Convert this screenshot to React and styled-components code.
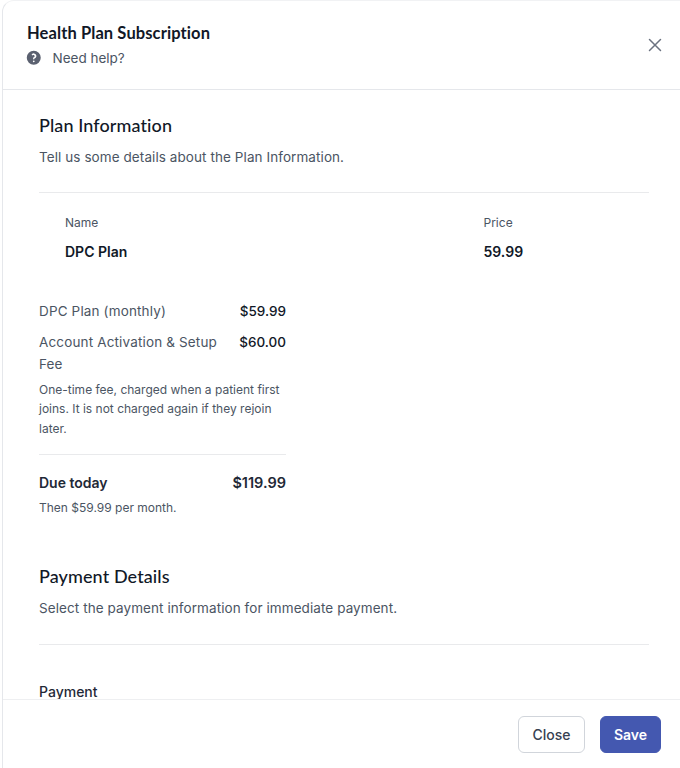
import React from "react";
import styled, { createGlobalStyle } from "styled-components";

const Global = createGlobalStyle`
  html, body { margin: 0; padding: 0; background: #fff; height: 100%; overflow: hidden; }
  body { font-family: Inter, "Liberation Sans", sans-serif; -webkit-font-smoothing: antialiased; }
`;

const Modal = styled.div`
  height: 768px; box-sizing: border-box; display: flex; flex-direction: column;
  background: #fff; border-left: 1px solid #e5e7eb; margin-left: 2px; width: 678px;
  border-top: 1px solid #f1f2f4; border-top-left-radius: 12px; overflow: hidden;
`;
const Header = styled.header`
  height: 89px; flex: none; box-sizing: border-box; margin-left: -3px; padding: 22px 16px 0 27px;
  border-bottom: 1px solid #e5e7eb; display: flex; justify-content: space-between; align-items: center;
`;
const HeaderText = styled.div`
  align-self: flex-start; display: flex; flex-direction: column; gap: 5px;
`;
const Title = styled.h1`
  margin: 0; font: 700 16.5px/20px Lato, "Open Sans", sans-serif; color: #111827; letter-spacing: 0.1px;
`;
const Help = styled.div`
  display: flex; align-items: center; gap: 10px; font-size: 13.5px; line-height: 20px; color: #4b5563;
`;
const HelpGlyph = styled.svg`
  margin-left: -2px; flex: none;
`;
const CloseIcon = styled.button`
  border: 0; background: none; padding: 0; display: flex; color: #6b7280; margin-top: -22px;
`;
const Body = styled.main`
  flex: 1; min-height: 0; overflow: hidden; padding: 24px 31px 0 36px;
`;
const SectionTitle = styled.h2`
  margin: 0; font: 500 18px/22px Lato, "Open Sans", sans-serif; color: #111827; letter-spacing: 0.1px;
`;
const SectionDesc = styled.p`
  margin: 11px 0 0; font-size: 13.5px; line-height: 20px; color: #4b5563; letter-spacing: 0.08px;
`;
const Rule = styled.hr`
  border: 0; border-top: 1px solid #e9eaec; margin: ${(p) => p.$m || "25px 0 0"};
`;
const PlanGrid = styled.div`
  display: grid; grid-template-columns: 418.5px 1fr; padding: 21px 0 0 26px; row-gap: 10px;
`;
const ColLabel = styled.div`
  font-size: 12px; line-height: 18px; color: #4b5563;
`;
const ColValue = styled.div`
  font-size: 14px; line-height: 20px; font-weight: 600; color: #111827;
`;
const Summary = styled.div`
  width: 247px; margin-top: 38px; display: flex; flex-direction: column;
`;
const Line = styled.div`
  display: flex; justify-content: space-between; gap: 12px; margin-bottom: ${(p) => p.$mb || 0}px;
`;
const LineLabel = styled.span`
  font-size: 13.5px; line-height: 22px; color: #4b5563; letter-spacing: 0.15px;
`;
const LineValue = styled.span`
  font-size: 13.5px; line-height: 22px; color: #111827; font-weight: 500; white-space: nowrap;
`;
const Note = styled.p`
  margin: ${(p) => p.$mt ?? 5}px 0 0; font-size: 12px; line-height: 19.4px; color: #4b5563;
`;
const TotalLabel = styled.span`
  font-size: 14px; line-height: 22px; font-weight: 600; color: #1f2937;
`;
const TotalValue = styled.span`
  font-size: 14.5px; line-height: 22px; font-weight: 600; color: #1f2937;
`;
const Divider = styled.hr`
  border: 0; border-top: 1px solid #e9eaec; margin: 16px 0 17px;
`;
const Section = styled.section`
  margin-top: 47px;
`;
const FieldLabel = styled.div`
  margin-top: 37px; font-size: 14px; line-height: 20px; font-weight: 500; color: #1f2937;
`;
const Footer = styled.footer`
  height: 69px; flex: none; box-sizing: border-box; margin-left: -3px; background: #fff;
  border-top: 1px solid #eeeff1; display: flex; justify-content: flex-end; align-items: flex-start;
  gap: 15px; padding: 16px 19px 0 0;
`;
const Button = styled.button`
  height: 37px; box-sizing: border-box; border-radius: 6px;
  font: ${(p) => (p.$primary ? 600 : 500)} 14px Inter, sans-serif;
  width: ${(p) => (p.$primary ? 61 : 67)}px; padding: 0;
  border: 1px solid ${(p) => (p.$primary ? "#4458b0" : "#d1d5db")};
  background: ${(p) => (p.$primary ? "#4458b0" : "#fff")};
  color: ${(p) => (p.$primary ? "#fff" : "#374151")};
`;

export default function App() {
  return (
    <>
      <Global />
      <Modal>
        <Header>
          <HeaderText>
            <Title>Health Plan Subscription</Title>
            <Help>
              <HelpGlyph width="17.5" height="17.5" viewBox="0 0 20 20" fill="#5b6170">
                <path fillRule="evenodd" clipRule="evenodd" d="M18 10a8 8 0 1 1-16 0 8 8 0 0 1 16 0ZM8.94 6.94a.75.75 0 1 1-1.06-1.06 3 3 0 1 1 2.87 5.01v.36a.75.75 0 0 1-1.5 0V10.5c0-.55.45-.9.85-1 .46-.1.9-.53.9-1.2a1.5 1.5 0 0 0-2.56-1.06l-.5.7ZM10 15a1 1 0 1 0 0-2 1 1 0 0 0 0 2Z" />
              </HelpGlyph>
              Need help?
            </Help>
          </HeaderText>
          <CloseIcon aria-label="Close">
            <svg width="18" height="18" viewBox="0 0 18 18" fill="none" stroke="currentColor" strokeWidth="1.5" strokeLinecap="round">
              <path d="M3.5 3.5 14.5 14.5M14.5 3.5 3.5 14.5" />
            </svg>
          </CloseIcon>
        </Header>
        <Body>
          <SectionTitle>Plan Information</SectionTitle>
          <SectionDesc>Tell us some details about the Plan Information.</SectionDesc>
          <Rule />
          <PlanGrid>
            <ColLabel>Name</ColLabel>
            <ColLabel>Price</ColLabel>
            <ColValue>DPC Plan</ColValue>
            <ColValue>59.99</ColValue>
          </PlanGrid>
          <Summary>
            <Line $mb={9}>
              <LineLabel>DPC Plan (monthly)</LineLabel>
              <LineValue>$59.99</LineValue>
            </Line>
            <Line>
              <LineLabel>Account Activation &amp; Setup Fee</LineLabel>
              <LineValue>$60.00</LineValue>
            </Line>
            <Note>One-time fee, charged when a patient first joins. It is not charged again if they rejoin later.</Note>
            <Divider />
            <Line>
              <TotalLabel>Due today</TotalLabel>
              <TotalValue>$119.99</TotalValue>
            </Line>
            <Note $mt={4}>Then $59.99 per month.</Note>
          </Summary>
          <Section>
            <SectionTitle>Payment Details</SectionTitle>
            <SectionDesc>Select the payment information for immediate payment.</SectionDesc>
            <Rule $m="26px 0 0" />
            <FieldLabel>Payment</FieldLabel>
          </Section>
        </Body>
        <Footer>
          <Button>Close</Button>
          <Button $primary>Save</Button>
        </Footer>
      </Modal>
    </>
  );
}
